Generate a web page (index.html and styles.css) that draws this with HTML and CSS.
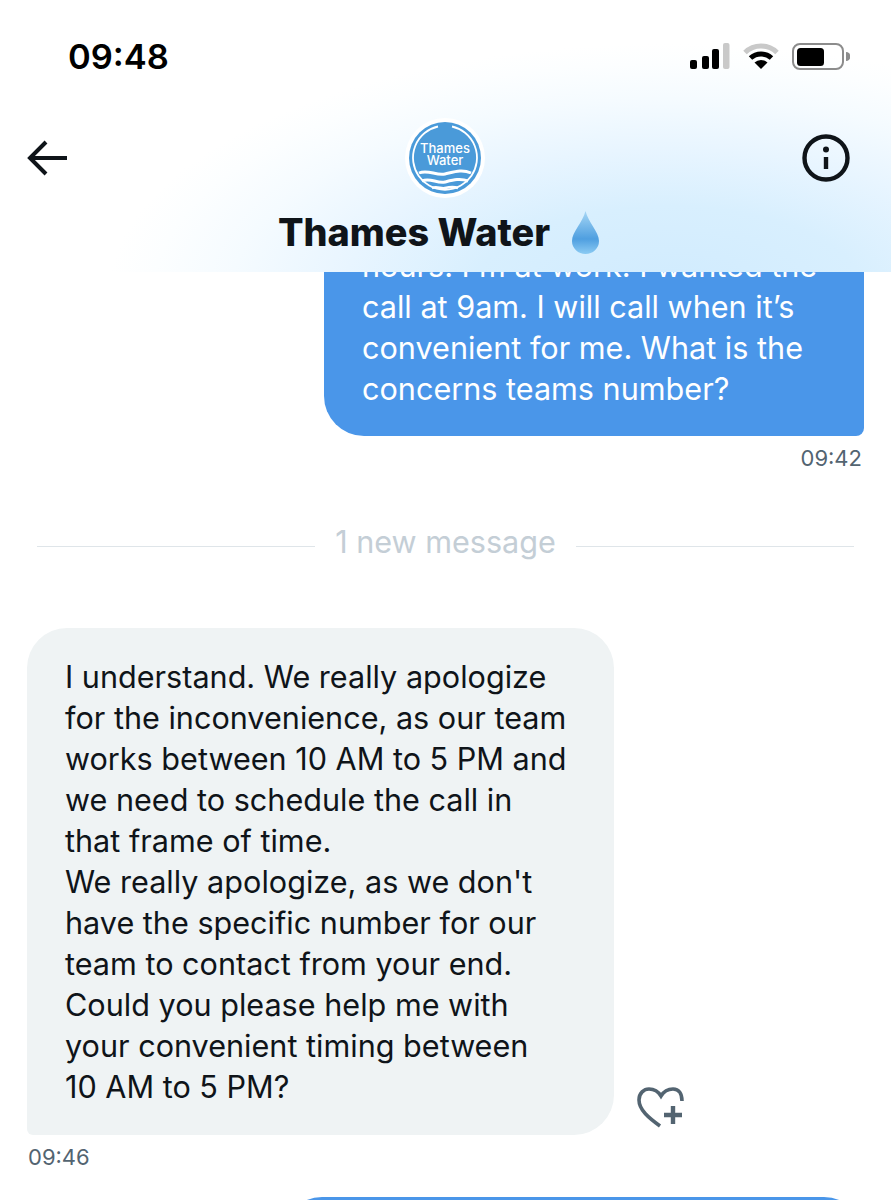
FILE: index.html
```html
<!DOCTYPE html>
<html lang="en">
  <head>
    <meta charset="utf-8">
    <title>Thames Water</title>
    <link rel="stylesheet" href="styles.css">
  </head>
  <body>
    <div class="screen">
      <header class="header">
        <div class="status-bar">
          <span class="clock">09:48</span>
          <div class="status-icons">
            <svg class="signal" width="40" height="27" viewBox="0 0 40 27">
              <rect x="0" y="17" width="7" height="9" rx="2" fill="#000"/>
              <rect x="12" y="13" width="7" height="13" rx="2" fill="#000"/>
              <rect x="22" y="6" width="7" height="20" rx="2" fill="#000"/>
              <rect x="33" y="0" width="6.500" height="26" rx="2" fill="#c9c9c9"/>
            </svg>
            <svg class="wifi" width="36" height="27" viewBox="0 0 36 27">
              <path d="M2 9.500a23 23 0 0 1 32 0" fill="none" stroke="#c9c9c9" stroke-width="5"/>
              <path d="M7.500 15a15.500 15.500 0 0 1 21 0" fill="none" stroke="#000" stroke-width="5"/>
              <path d="M18 26l-6.500-6.500a9.500 9.500 0 0 1 13 0z" fill="#000"/>
            </svg>
            <svg class="battery" width="58" height="27" viewBox="0 0 58 27">
              <rect x="1" y="1" width="50" height="25" rx="7" fill="none" stroke="#8c8c8c" stroke-width="2"/>
              <rect x="5" y="5" width="27" height="18" rx="3.500" fill="#000"/>
              <path d="M54 9a4 4 0 0 1 0 9z" fill="#8c8c8c"/>
            </svg>
          </div>
        </div>
        <div class="nav-row">
          <svg class="nav-icon" width="42" height="42" viewBox="0 0 42 42">
            <path d="M40 21H4M19 5L3 21l16 16" fill="none" stroke="#0f1419" stroke-width="4"/>
          </svg>
          <svg class="logo" width="80" height="80" viewBox="0 0 80 80">
            <circle cx="40" cy="40" r="40" fill="#fff"/>
            <circle cx="40" cy="40" r="36" fill="#4a9ad9"/>
            <path d="M33 8.500A32 32 0 1 0 47 8.500" fill="none" stroke="#fff" stroke-width="1.800"/>
            <text class="logo-text" x="40" y="35">Thames</text>
            <text class="logo-text" x="40" y="47">Water</text>
            <path d="M14 55c9-4 17 3 26 1s17-5 26-1" fill="none" stroke="#fff" stroke-width="3"/>
            <path d="M17 63c8-4 15 3 23 1s15-4 23-1" fill="none" stroke="#fff" stroke-width="3"/>
            <path d="M27 70c5-2 9 1 13 0s8-2 13 0" fill="none" stroke="#fff" stroke-width="2.500"/>
          </svg>
          <svg class="nav-icon" width="48" height="48" viewBox="0 0 48 48">
            <circle cx="24" cy="24" r="21.500" fill="none" stroke="#0f1419" stroke-width="4.400"/>
            <circle cx="24" cy="15.500" r="3" fill="#0f1419"/>
            <rect x="21.800" y="23" width="4.400" height="12" fill="#0f1419"/>
          </svg>
        </div>
        <div class="title-row">
          <h1 class="title">Thames Water</h1>
          <svg class="drop" width="27" height="43" viewBox="0 0 27 43">
            <defs>
              <linearGradient id="dropFill" x1="0" y1="0" x2="0" y2="1">
                <stop offset="0" stop-color="#a5d6f5"/>
                <stop offset="0.650" stop-color="#4f9fe0"/>
                <stop offset="1" stop-color="#8ccbf3"/>
              </linearGradient>
            </defs>
            <path d="M13.500 0C11 11 0 21 0 30a13.500 13 0 0 0 27 0C27 21 16 11 13.500 0z" fill="url(#dropFill)"/>
          </svg>
        </div>
      </header>

      <main class="thread">
        <div class="bubble bubble-sent">hours. I'm at work. I wanted the<br>call at 9am. I will call when it’s<br>convenient for me. What is the<br>concerns teams number?</div>
        <div class="time time-sent">09:42</div>

        <div class="divider">
          <span class="divider-line"></span>
          <span class="divider-text">1 new message</span>
          <span class="divider-line"></span>
        </div>

        <div class="received-row">
          <div class="bubble bubble-received">I understand. We really apologize<br>for the inconvenience, as our team<br>works between 10 AM to 5 PM and<br>we need to schedule the call in<br>that frame of time.<br>We really apologize, as we don't<br>have the specific number for our<br>team to contact from your end.<br>Could you please help me with<br>your convenient timing between<br>10 AM to 5 PM?</div>
          <svg class="react" width="47" height="42" viewBox="0 0 47 42">
            <path d="M23 39C12 31 2 23 2 13 2 6 7 2 12 2c5 0 9 2 12 7 3-5 7-7 12-7 6 0 9 5 9 12" fill="none" stroke="#536471" stroke-width="3.600"/>
            <path d="M36 19v18M27 28h18" fill="none" stroke="#536471" stroke-width="4.400"/>
          </svg>
        </div>
        <div class="time time-received">09:46</div>

        <div class="bubble bubble-next"></div>
      </main>
    </div>
  </body>
</html>
```

FILE: styles.css
```css
body {
  margin: 0;
  background-color: #fff;
  color: #0f1419;
  font-family: Inter, "Liberation Sans", sans-serif;
}

.screen {
  position: relative;
  height: 1200px;
  overflow: hidden;
}

.header {
  position: absolute;
  top: 0;
  left: 0;
  right: 0;
  height: 272px;
  box-sizing: border-box;
  padding: 36px 41px 0 27px;
  background:
    radial-gradient(ellipse 560px 250px at 75% 108%, #d0ebfe 0%, #d8effe 35%, #e8f5ff 58%, #f5fbff 78%, #fcfeff 92%, #fff 100%);
}

.status-bar {
  display: flex;
  align-items: center;
  justify-content: space-between;
  height: 40px;
  padding-left: 41px;
}

.clock {
  font-size: 34.500px;
  font-weight: 600;
  color: #000;
}

.status-icons {
  display: flex;
  align-items: center;
  gap: 13px;
}

.status-icons svg {
  display: block;
}

.nav-row {
  display: flex;
  align-items: center;
  justify-content: space-between;
  margin-top: 42px;
}

.nav-icon, .logo {
  display: block;
}

.logo {
  margin-left: 19px;
}

.logo-text {
  fill: #fff;
  font-size: 13px;
  font-weight: 500;
  text-anchor: middle;
}

.title-row {
  display: flex;
  align-items: center;
  justify-content: center;
  gap: 22px;
  height: 44px;
  margin-top: 12px;
}

.title {
  margin: 0;
  font-size: 37.800px;
  font-weight: 800;
}

.thread {
  display: flex;
  flex-direction: column;
  padding: 220px 27px 0;
}

.bubble {
  box-sizing: border-box;
  font-size: 30.600px;
  line-height: 41px;
}

.bubble-sent {
  align-self: flex-end;
  width: 540px;
  padding: 25px 38px 27px;
  border-radius: 40px 40px 8px 40px;
  background-color: #4a96e9;
  color: #fff;
}

.time {
  font-size: 22px;
  line-height: 28px;
  color: #536471;
}

.time-sent {
  align-self: flex-end;
  margin-top: 8px;
  margin-right: 2px;
}

.divider {
  display: flex;
  align-items: center;
  gap: 20px;
  height: 41px;
  margin: 49px 10px 0;
}

.divider-line {
  flex: 1;
  height: 1px;
  margin-top: 9px;
  background-color: #dfe5e9;
}

.divider-text {
  font-size: 30.600px;
  color: #c4ced6;
}

.received-row {
  display: flex;
  align-items: flex-end;
  gap: 23px;
  margin-top: 66px;
}

.bubble-received {
  width: 587px;
  padding: 28px 38px;
  border-radius: 40px 40px 40px 6px;
  background-color: #eff3f4;
}

.react {
  display: block;
  margin-bottom: 6px;
}

.time-received {
  margin-top: 8px;
  margin-left: 1px;
}

.bubble-next {
  align-self: flex-end;
  width: 582px;
  height: 120px;
  margin-top: 26px;
  border-radius: 40px;
  background-color: #4a96e9;
}
```
